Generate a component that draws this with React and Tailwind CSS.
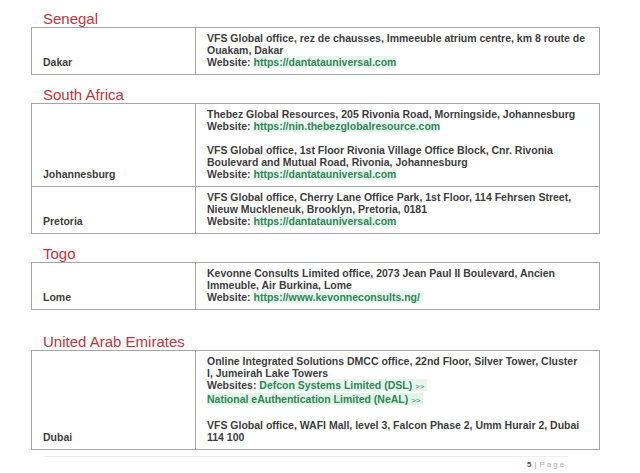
import React from "react";

const Link = ({ children }) => (
  <span className="text-[#2f8656] bg-[#e9f6f0]">{children}</span>
);

const Heading = ({ children, className = "" }) => (
  <div className={"pl-[12px] text-[15px] leading-[16px] text-[#c3343c] " + className}>
    {children}
  </div>
);

const Row = ({ city, children, first }) => (
  <div className={"flex " + (first ? "" : "border-t border-[#a6a6a6]")}>
    <div className="w-[164px] border-r border-[#a6a6a6] pl-[11px] pb-[6px] flex items-end">
      <span>{city}</span>
    </div>
    <div className="flex-1 pl-[11px] pt-[4px] pb-[6px] whitespace-nowrap">{children}</div>
  </div>
);

const Table = ({ children }) => (
  <div className="w-[569px] border border-[#a6a6a6]">{children}</div>
);

export default function App() {
  return (
    <div
      className="w-[640px] h-[473px] bg-white overflow-hidden pt-[11px] pl-[31px] text-[#3d3d3d] font-bold text-[10.5px] leading-[12px]"
      style={{ fontFamily: '"Liberation Sans", Arial, sans-serif' }}
    >
      <Heading className="font-normal">Senegal</Heading>
      <Table>
        <Row city="Dakar" first>
          <div>VFS Global office, rez de chausses, Immeeuble atrium centre, km 8 route de</div>
          <div>Ouakam, Dakar</div>
          <div>
            Website: <Link>https://dantatauniversal.com</Link>
          </div>
        </Row>
      </Table>

      <Heading className="font-normal mt-[12px]">South Africa</Heading>
      <Table>
        <Row city="Johannesburg" first>
          <div>Thebez Global Resources, 205 Rivonia Road, Morningside, Johannesburg</div>
          <div>
            Website: <Link>https://nin.thebezglobalresource.com</Link>
          </div>
          <div className="h-[12px]"></div>
          <div>VFS Global office, 1st Floor Rivonia Village Office Block, Cnr. Rivonia</div>
          <div>Boulevard and Mutual Road, Rivonia, Johannesburg</div>
          <div>
            Website: <Link>https://dantatauniversal.com</Link>
          </div>
        </Row>
        <Row city="Pretoria">
          <div>VFS Global office, Cherry Lane Office Park, 1st Floor, 114 Fehrsen Street,</div>
          <div>Nieuw Muckleneuk, Brooklyn, Pretoria, 0181</div>
          <div>
            Website: <Link>https://dantatauniversal.com</Link>
          </div>
        </Row>
      </Table>

      <Heading className="font-normal mt-[12px]">Togo</Heading>
      <Table>
        <Row city="Lome" first>
          <div>Kevonne Consults Limited office, 2073 Jean Paul II Boulevard, Ancien</div>
          <div>Immeuble, Air Burkina, Lome</div>
          <div>
            Website: <Link>https://www.kevonneconsults.ng/&nbsp;</Link>
          </div>
        </Row>
      </Table>

      <Heading className="font-normal mt-[24px]">United Arab Emirates</Heading>
      <Table>
        <Row city="Dubai" first>
          <div>Online Integrated Solutions DMCC office, 22nd Floor, Silver Tower, Cluster</div>
          <div>I, Jumeirah Lake Towers</div>
          <div>
            Websites: <Link>Defcon Systems Limited (DSL) <span className="font-normal text-[8px]">&gt;&gt;</span>&nbsp;</Link>
          </div>
          <div>
            <span className="text-[#2f8656] bg-[#e3f4e9]">National eAuthentication Limited (NeAL) <span className="font-normal text-[8px]">&gt;&gt;</span>&nbsp;</span>
          </div>
          <div className="h-[12px]"></div>
          <div>VFS Global office, WAFI Mall, level 3, Falcon Phase 2, Umm Hurair 2, Dubai</div>
          <div>114 100</div>
        </Row>
      </Table>

      <div className="mt-[6px] ml-[13px] w-[524px] h-px bg-[#ededed]"></div>
      <div className="mt-[3px] ml-[496px] text-[8px] leading-[10px] font-normal flex items-center gap-[3px]">
        <span className="font-bold text-[#555]">5</span>
        <span className="text-[#999]">|</span>
        <span className="text-[#b0b0b0] tracking-[2px]">Page</span>
      </div>
    </div>
  );
}
